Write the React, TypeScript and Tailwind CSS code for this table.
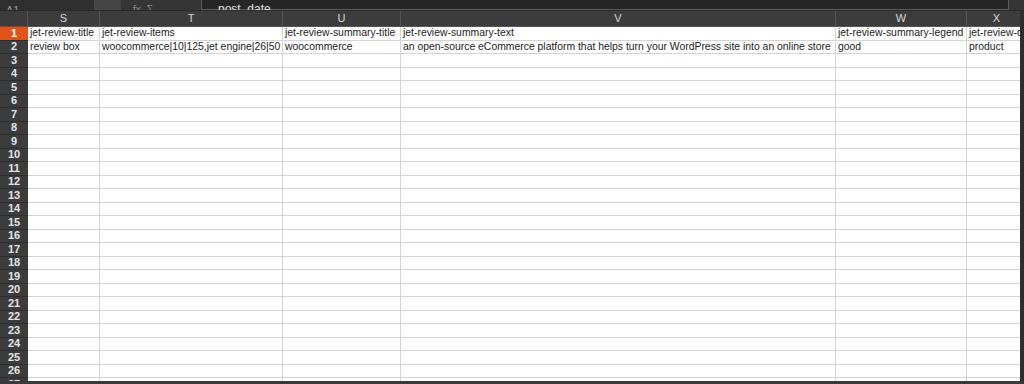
import React from "react"

const cols = [
  { name: "S", w: 72 },
  { name: "T", w: 183 },
  { name: "U", w: 118 },
  { name: "V", w: 435 },
  { name: "W", w: 131 },
  { name: "X", w: 60 },
]

const rows: string[][] = [
  ["jet-review-title", "jet-review-items", "jet-review-summary-title", "jet-review-summary-text", "jet-review-summary-legend", "jet-review-d"],
  ["review box", "woocommerce|10|125,jet engine|26|50", "woocommerce", "an open-source eCommerce platform that helps turn your WordPress site into an online store", "good", "product"],
]

export default function App() {
  const rowCount = 27
  return (
    <div className="w-[1024px] h-[384px] overflow-hidden bg-[#3b3b3b] flex flex-col" style={{ fontFamily: '"Liberation Sans", Arial, sans-serif' }}>
      {/* toolbar, cut off at the top */}
      <div className="h-[10px] shrink-0 overflow-hidden flex bg-[#353535]">
        <div className="w-[95px] h-full bg-[#2f2f2f] border-r border-[#4a4a4a] flex items-end pl-[6px]">
          <span className="text-[11px] leading-none text-[#9a9a9a] -mb-[6px]">A1</span>
        </div>
        <div className="w-[26px] h-full bg-[#454545]" />
        <div className="w-[80px] h-full flex items-end gap-[6px] pl-[12px] text-[#8a8a8a] text-[10px] leading-none">
          <span className="-mb-[5px]">fx</span>
          <span className="-mb-[5px]">Σ</span>
        </div>
        <div className="w-[808px] h-full bg-[#262626] border-x border-b border-[#5a5a5a] flex items-end pl-[16px]">
          <span className="text-[12px] leading-none text-[#e0e0e0] -mb-[6px]">post_date</span>
        </div>
      </div>
      <div className="h-[1px] shrink-0 bg-[#2a2a2a]" />

      <div className="flex-1 flex min-h-0">
        <div className="w-[1020px] flex flex-col overflow-hidden">
          {/* column headers */}
          <div className="h-[16px] shrink-0 flex bg-[#3c3c3c] border-b border-[#555]">
            <div className="w-[28px] shrink-0 border-r border-[#555]" />
            {cols.map((c) => (
              <div
                key={c.name}
                className="shrink-0 border-r border-[#555] flex items-center justify-center text-[11px] leading-none text-[#d8d8d8]"
                style={{ width: c.w }}
              >
                {c.name}
              </div>
            ))}
          </div>

          {/* rows */}
          <div className="flex flex-col">
            {Array.from({ length: rowCount }).map((_, i) => {
              const data = rows[i]
              return (
                <div key={i} className="h-[13.5px] shrink-0 flex">
                  <div
                    className={
                      i === 0
                        ? "w-[28px] shrink-0 bg-[#e2531c] border-b border-[#2e2e2e] flex items-center justify-center text-[11px] font-bold leading-none text-white"
                        : "w-[28px] shrink-0 bg-[#3c3c3c] border-b border-[#2e2e2e] flex items-center justify-center text-[11px] font-bold leading-none text-[#e4e4e4]"
                    }
                  >
                    {i + 1}
                  </div>
                  {cols.map((c, j) => (
                    <div
                      key={c.name}
                      className="shrink-0 bg-white border-r border-b border-[#d4d4d4] overflow-hidden whitespace-nowrap flex items-center pl-[2px] text-[10.4px] leading-none text-[#1e1e1e]"
                      style={{ width: c.w }}
                    >
                      {data ? data[j] : ""}
                    </div>
                  ))}
                </div>
              )
            })}
          </div>
        </div>
        <div className="flex-1 bg-[#2e2e2e]" />
      </div>
      <div className="h-[3px] shrink-0 bg-[#3a3a3a]" />
    </div>
  )
}
